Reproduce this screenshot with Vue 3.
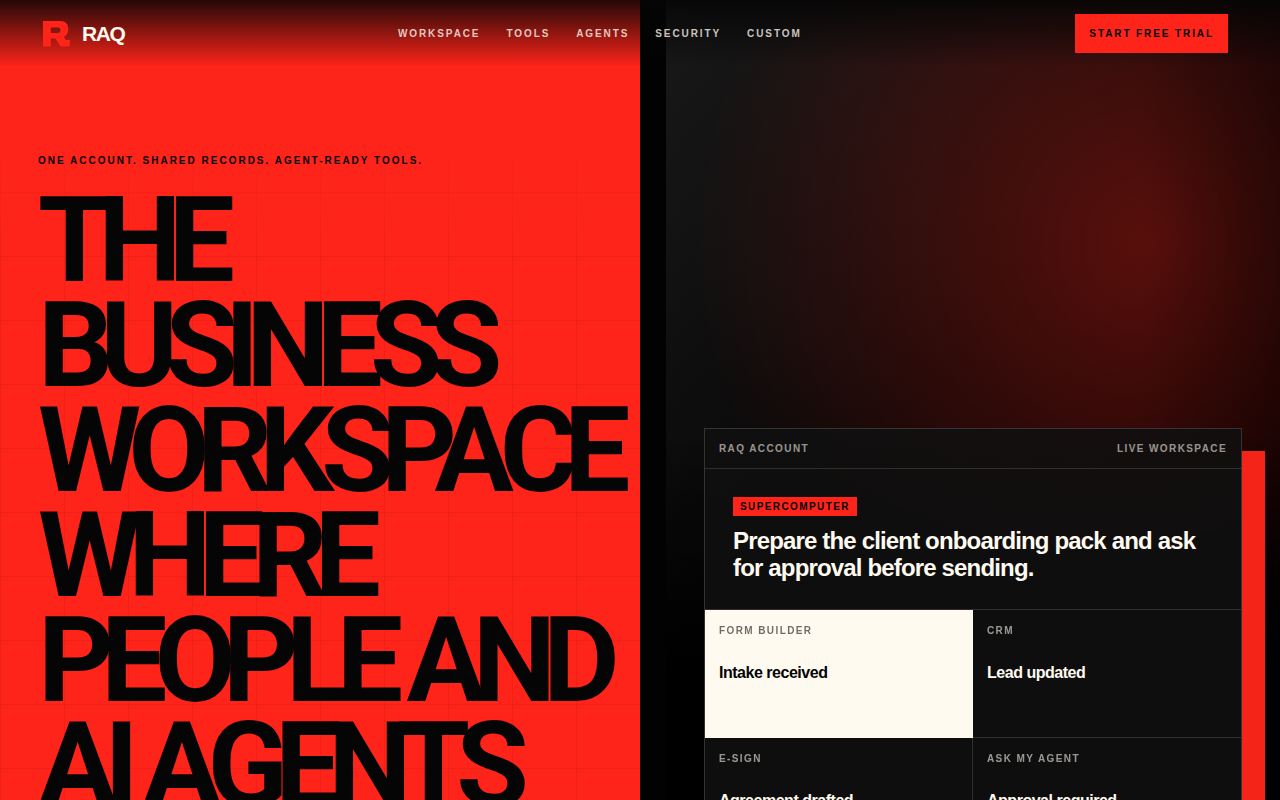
<script setup>
const links = ['Workspace', 'Tools', 'Agents', 'Security', 'Custom']
const lines = ['The', 'business', 'workspace', 'where', 'people and', 'AI agents']
const steps = [
  { tool: 'Form Builder', status: 'Intake received', active: true },
  { tool: 'CRM', status: 'Lead updated' },
  { tool: 'E-Sign', status: 'Agreement drafted' },
  { tool: 'Ask My Agent', status: 'Approval required' },
]
</script>

<template>
  <div class="page">
    <header class="topbar">
      <a class="brand" href="#top">
        <svg class="mark" viewBox="0 0 28 26" aria-hidden="true">
          <path fill-rule="evenodd" d="M0 0H17.500C22.500 0 25.300 3 25.300 8C25.300 11.700 23.800 14.400 21 16L22.600 19H27.200L26.300 25.500H17.500L12.400 17.500H7.800V25.500H0ZM7.800 6.500V12H15C18.300 12 18.300 6.500 15 6.500Z" />
        </svg>
        <span>RAQ</span>
      </a>
      <nav class="links">
        <a v-for="link in links" :key="link" href="#">{{ link }}</a>
      </nav>
      <button class="cta" type="button">Start free trial</button>
    </header>

    <main class="hero">
      <section class="intro">
        <p class="eyebrow">One account. Shared records. Agent-ready tools.</p>
        <h1 class="title">
          <span v-for="line in lines" :key="line">{{ line }}</span>
        </h1>
      </section>

      <section class="visual">
        <article class="card">
          <div class="card-head">
            <span>RAQ account</span>
            <span>Live workspace</span>
          </div>
          <div class="prompt">
            <span class="tag">Supercomputer</span>
            <h2>Prepare the client onboarding pack and ask for approval before sending.</h2>
          </div>
          <div class="steps">
            <div v-for="step in steps" :key="step.tool" class="step" :class="{ active: step.active }">
              <span>{{ step.tool }}</span>
              <strong>{{ step.status }}</strong>
            </div>
          </div>
        </article>
      </section>
    </main>
  </div>
</template>

<style>
body {
  background: #050505;
}
</style>

<style scoped>
.page {
  --red: #ff2419;
  --ink: #050505;
  --cream: #fffaf0;
  position: relative;
  height: 100vh;
  overflow: hidden;
  background: #000;
  color: var(--cream);
  font-family: "Liberation Sans", Arial, sans-serif;
}
.topbar {
  position: absolute;
  inset: 0 0 auto;
  z-index: 2;
  display: flex;
  justify-content: space-between;
  align-items: center;
  height: 67px;
  padding: 0 52px 0 43px;
  box-sizing: border-box;
  background: linear-gradient(180deg, rgba(5, 5, 5, 0.88), rgba(5, 5, 5, 0));
}
.brand {
  display: flex;
  align-items: center;
  gap: 11px;
  color: var(--cream);
  font-size: 21px;
  font-weight: 700;
  letter-spacing: -0.07em;
  text-decoration: none;
}
.mark {
  width: 28px;
  height: 26px;
  fill: var(--red);
}
.links {
  display: flex;
  gap: 26px;
}
.links a {
  color: rgba(255, 250, 240, 0.78);
  font-size: 10px;
  font-weight: 700;
  letter-spacing: 0.19em;
  text-decoration: none;
  text-transform: uppercase;
}
.cta {
  height: 39px;
  padding: 0 14px;
  border: 0;
  background: var(--red);
  color: var(--ink);
  font: 700 10px "Liberation Sans", Arial, sans-serif;
  letter-spacing: 0.19em;
  text-transform: uppercase;
}
.hero {
  display: grid;
  grid-template-columns: 1fr 1fr;
  min-height: 100vh;
}
.intro {
  position: relative;
  min-width: 0;
  padding: 154px 0 0 38px;
  overflow: hidden;
  background: var(--red);
  color: var(--ink);
}
.intro::before {
  content: "";
  position: absolute;
  inset: 0;
  background:
    linear-gradient(90deg, rgba(5, 5, 5, 0.06) 1px, transparent 1px) 0 0 / 64px 64px,
    linear-gradient(rgba(5, 5, 5, 0.06) 1px, transparent 1px) 0 0 / 64px 64px;
  mask-image: linear-gradient(180deg, transparent 130px, #000 240px);
}
.eyebrow {
  position: relative;
  margin: 0 0 21px;
  font-size: 10px;
  font-weight: 700;
  line-height: 14px;
  letter-spacing: 0.2em;
  text-transform: uppercase;
}
.title {
  position: relative;
  margin: 0;
  font-family: Roboto, "Liberation Sans", sans-serif;
  font-size: 118px;
  font-weight: 700;
  line-height: 105px;
  letter-spacing: -0.11em;
  text-transform: uppercase;
  white-space: nowrap;
}
.title span {
  display: block;
}
.visual {
  padding: 428px 38px 0 64px;
  background:
    linear-gradient(90deg, #020202 26px, transparent 26px),
    linear-gradient(90deg, transparent 78%, rgba(0, 0, 0, 0.35)),
    linear-gradient(180deg, transparent 50%, #000 78%),
    radial-gradient(circle at 80% 28%, rgba(255, 36, 25, 0.34), transparent 460px),
    linear-gradient(130deg, #1a1a1a, #060606 45%, #000 75%);
}
.card {
  border: 1px solid rgba(255, 250, 240, 0.16);
  background: rgba(16, 16, 16, 0.88);
  box-shadow: 23px 23px 0 #f42419;
}
.card-head {
  display: flex;
  justify-content: space-between;
  padding: 12px 14px;
  border-bottom: 1px solid rgba(255, 250, 240, 0.14);
  color: rgba(255, 250, 240, 0.58);
  font-size: 10px;
  font-weight: 700;
  line-height: 15px;
  letter-spacing: 0.14em;
  text-transform: uppercase;
}
.prompt {
  padding: 28px;
  border-bottom: 1px solid rgba(255, 250, 240, 0.14);
}
.tag {
  display: block;
  width: fit-content;
  padding: 4px 7px;
  background: var(--red);
  color: var(--ink);
  font-size: 10px;
  font-weight: 700;
  line-height: 11px;
  letter-spacing: 0.14em;
  text-transform: uppercase;
}
.prompt h2 {
  margin: 11px 0 0;
  font-size: 24px;
  font-weight: 700;
  line-height: 27px;
  letter-spacing: -0.035em;
}
.steps {
  display: grid;
  grid-template-columns: 1fr 1fr;
}
.step {
  height: 128px;
  box-sizing: border-box;
  padding: 14px;
  border-right: 1px solid rgba(255, 250, 240, 0.14);
  border-bottom: 1px solid rgba(255, 250, 240, 0.14);
}
.step:nth-child(even) {
  border-right: 0;
}
.step span {
  display: block;
  opacity: 0.58;
  font-size: 10px;
  font-weight: 700;
  line-height: 14px;
  letter-spacing: 0.14em;
  text-transform: uppercase;
}
.step strong {
  display: block;
  margin-top: 25px;
  font-size: 16px;
  line-height: 20px;
  letter-spacing: -0.03em;
}
.step.active {
  background: var(--cream);
  color: var(--ink);
}
</style>
